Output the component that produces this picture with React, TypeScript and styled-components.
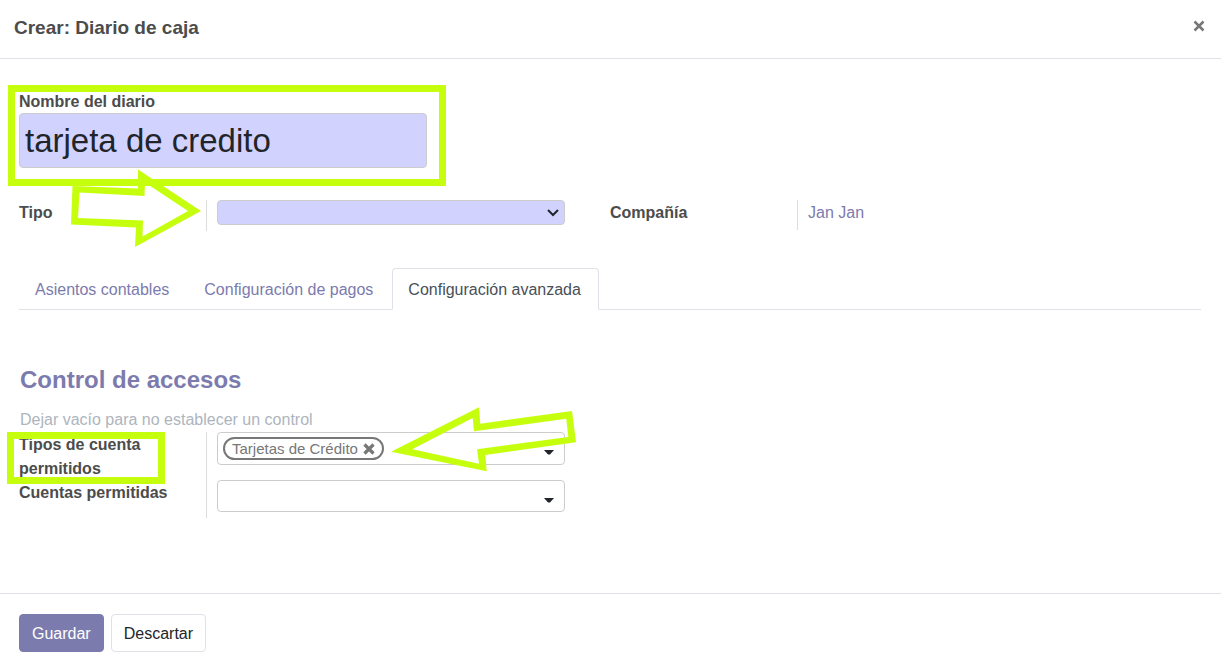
import React from "react";
import styled, { createGlobalStyle } from "styled-components";

const GlobalStyle = createGlobalStyle`
  *, *::before, *::after { box-sizing: border-box; }
  body {
    margin: 0;
    background: #fff;
    color: #4c4c4c;
    font-family: "Liberation Sans", Arial, sans-serif;
    font-size: 16px;
    line-height: 24px;
  }
  button, input, select { font: inherit; color: inherit; }
`;

const ACCENT = "#7c7bad";
const MARK = "#c5ff0d";

const Dialog = styled.div`
  position: relative;
`;

const Header = styled.header`
  display: flex;
  align-items: center;
  justify-content: space-between;
  padding: 13px 14px 15px;
  border-bottom: 1px solid #dee2e6;
`;

const Title = styled.h4`
  margin: 0;
  font-size: 19px;
  line-height: 30px;
`;

const CloseButton = styled.button`
  display: flex;
  padding: 2px;
  margin-bottom: 5px;
  border: 0;
  background: none;
  color: #777;
`;

const Body = styled.main`
  padding: 31px 20px 75px 19px;
`;

const Label = styled.label`
  font-weight: bold;
`;

const NameBlock = styled.div`
  position: relative;
  display: flex;
  flex-direction: column;
  width: 408px;
  max-width: 100%;
  line-height: 23px;
`;

const NameInput = styled.input`
  width: 100%;
  height: 55px;
  padding: 0 5px;
  border: 1px solid #ccc;
  border-radius: 4px;
  background: #d2d2ff;
  color: #212529;
  font-size: 33px;
`;

const Frame = styled.span<{ $inset: string }>`
  position: absolute;
  inset: ${(p) => p.$inset};
  border: 7px solid ${MARK};
  pointer-events: none;
`;

const Groups = styled.div<{ $top: number }>`
  display: grid;
  grid-template-columns: repeat(2, minmax(0, 1fr));
  align-items: start;
  margin-top: ${(p) => p.$top}px;
`;

const Group = styled.div`
  padding-right: 45px;
`;

const Row = styled.div<{ $height: number }>`
  display: grid;
  grid-template-columns: 187px minmax(0, 1fr);
  min-height: ${(p) => p.$height}px;
`;

const LabelCell = styled.div`
  margin-bottom: -1px;
  padding: 1px 30px 0 0;
`;

const FramedLabel = styled.div`
  position: relative;
`;

const FieldCell = styled.div`
  padding-left: 10px;
  border-left: 1px solid #ddd;
`;

const SelectWrap = styled.div`
  position: relative;
`;

const TypeSelect = styled.select`
  display: block;
  width: 100%;
  height: 25px;
  padding: 0 24px 0 5px;
  border: 1px solid #ccc;
  border-radius: 4px;
  background: #d2d2ff;
  appearance: none;
`;

const Chevron = styled.svg`
  position: absolute;
  top: 9px;
  right: 6px;
  pointer-events: none;
`;

const Link = styled.a`
  display: block;
  padding-top: 1px;
  color: ${ACCENT};
  text-decoration: none;
`;

const Tabs = styled.nav`
  display: flex;
  gap: 1px;
  margin-top: 37px;
  border-bottom: 1px solid #dee2e6;
`;

const Tab = styled.a<{ $active?: boolean }>`
  margin-bottom: -1px;
  padding: 9px 17px 7px 15px;
  border: 1px solid;
  border-color: ${(p) => (p.$active ? "#dee2e6 #dee2e6 #fff" : "transparent")};
  border-radius: 4px 4px 0 0;
  color: ${(p) => (p.$active ? "#495057" : ACCENT)};
  text-decoration: none;
`;

const SectionTitle = styled.h2`
  margin: 52px 0 0;
  padding-left: 1px;
  color: ${ACCENT};
  font-size: 24px;
  line-height: 36px;
`;

const Hint = styled.p`
  margin: 10px 0 0;
  padding-left: 1px;
  color: #adb5bd;
`;

const TagField = styled.div`
  display: flex;
  align-items: center;
  min-height: 32px;
  padding: 4px 10px 4px 5px;
  border: 1px solid #ccc;
  border-radius: 4px;
`;

const Tag = styled.span`
  display: flex;
  align-items: center;
  gap: 5px;
  height: 23px;
  padding: 0 7px;
  border: 2px solid #777;
  border-radius: 12px;
  color: #777;
  font-size: 15px;
  white-space: nowrap;
`;

const TagRemove = styled.button`
  display: flex;
  padding: 0;
  border: 0;
  background: none;
`;

const TagInput = styled.input`
  flex: 1;
  width: 0;
  height: 20px;
  padding: 0;
  border: 0;
  outline: 0;
  background: none;
`;

const Caret = styled.svg`
  flex: none;
  margin-top: 8px;
`;

const Footer = styled.footer`
  display: flex;
  gap: 7px;
  padding: 20px 19px;
  border-top: 1px solid #dee2e6;
`;

const Button = styled.button<{ $primary?: boolean }>`
  height: 38px;
  padding: 2px 12px 0;
  border: 1px solid ${(p) => (p.$primary ? ACCENT : "#dee2e6")};
  border-radius: 4px;
  background: ${(p) => (p.$primary ? ACCENT : "#fff")};
  color: ${(p) => (p.$primary ? "#fff" : "#212529")};
`;

const Arrows = styled.svg`
  position: absolute;
  top: 0;
  left: 0;
  pointer-events: none;
`;

const Cross = ({ weight }: { weight: number }) => (
  <svg width="12" height="12" viewBox="0 0 12 12" aria-hidden="true">
    <path d="M1.5 1.5L10.5 10.5M10.5 1.5L1.5 10.5" stroke="currentColor" strokeWidth={weight} />
  </svg>
);

const DownCaret = () => (
  <Caret width="10" height="5" viewBox="0 0 10 5" aria-hidden="true">
    <path d="M0 0H10L6 4.5H4Z" fill="#212529" />
  </Caret>
);

export default function App() {
  return (
    <Dialog role="dialog" aria-labelledby="title">
      <GlobalStyle />
      <Header>
        <Title id="title">Crear: Diario de caja</Title>
        <CloseButton type="button" aria-label="Cerrar">
          <Cross weight={2.5} />
        </CloseButton>
      </Header>

      <Body>
        <NameBlock>
          <Label htmlFor="name">Nombre del diario</Label>
          <NameInput id="name" defaultValue="tarjeta de credito" />
          <Frame $inset="-5px -19px -18px -11px" />
        </NameBlock>

        <Groups $top={32}>
          <Group>
            <Row $height={31}>
              <LabelCell>
                <Label htmlFor="type">Tipo</Label>
              </LabelCell>
              <FieldCell>
                <SelectWrap>
                  <TypeSelect id="type" defaultValue="">
                    <option value="" />
                  </TypeSelect>
                  <Chevron width="12" height="8" viewBox="0 0 12 8" aria-hidden="true">
                    <path d="M1 1L6 6L11 1" fill="none" stroke="#212529" strokeWidth="2" />
                  </Chevron>
                </SelectWrap>
              </FieldCell>
            </Row>
          </Group>
          <Row $height={30}>
            <LabelCell>
              <Label as="span">Compañía</Label>
            </LabelCell>
            <FieldCell>
              <Link href="#company">Jan Jan</Link>
            </FieldCell>
          </Row>
        </Groups>

        <Tabs>
          <Tab href="#entries">Asientos contables</Tab>
          <Tab href="#payments">Configuración de pagos</Tab>
          <Tab href="#advanced" $active aria-current="page">
            Configuración avanzada
          </Tab>
        </Tabs>

        <SectionTitle>Control de accesos</SectionTitle>
        <Hint>Dejar vacío para no establecer un control</Hint>
        <Groups $top={0}>
          <Group>
            <Row $height={48}>
              <LabelCell>
                <FramedLabel>
                  <Label htmlFor="types">Tipos de cuenta permitidos</Label>
                  <Frame $inset="-1px 11px -3px -12px" />
                </FramedLabel>
              </LabelCell>
              <FieldCell>
                <TagField>
                  <Tag>
                    Tarjetas de Crédito
                    <TagRemove type="button" aria-label="Quitar">
                      <Cross weight={3.2} />
                    </TagRemove>
                  </Tag>
                  <TagInput id="types" />
                  <DownCaret />
                </TagField>
              </FieldCell>
            </Row>
            <Row $height={38}>
              <LabelCell>
                <Label htmlFor="accounts">Cuentas permitidas</Label>
              </LabelCell>
              <FieldCell>
                <TagField>
                  <TagInput id="accounts" />
                  <DownCaret />
                </TagField>
              </FieldCell>
            </Row>
          </Group>
        </Groups>
      </Body>

      <Footer>
        <Button type="button" $primary>
          Guardar
        </Button>
        <Button type="button">Descartar</Button>
      </Footer>

      <Arrows width="600" height="500" viewBox="0 0 600 500" fill={MARK} fillRule="evenodd" aria-hidden="true">
        <path d="M138 169.5L201 211L135 247L136 227.5L71 224.5L72.5 186L138 188.5ZM145 182.5L188 211L142.5 236.5L143 220.5L78 218L79.5 192.5L144.5 196Z" />
        <path d="M391 451.7L479 407.3L480.3 423.7L572 411L576 442.3L485.3 455L486.7 471.3ZM412.3 449.3L472.7 418L474 431.3L566.3 418.7L568.3 437L477 449.3L479 463.7Z" />
      </Arrows>
    </Dialog>
  );
}
